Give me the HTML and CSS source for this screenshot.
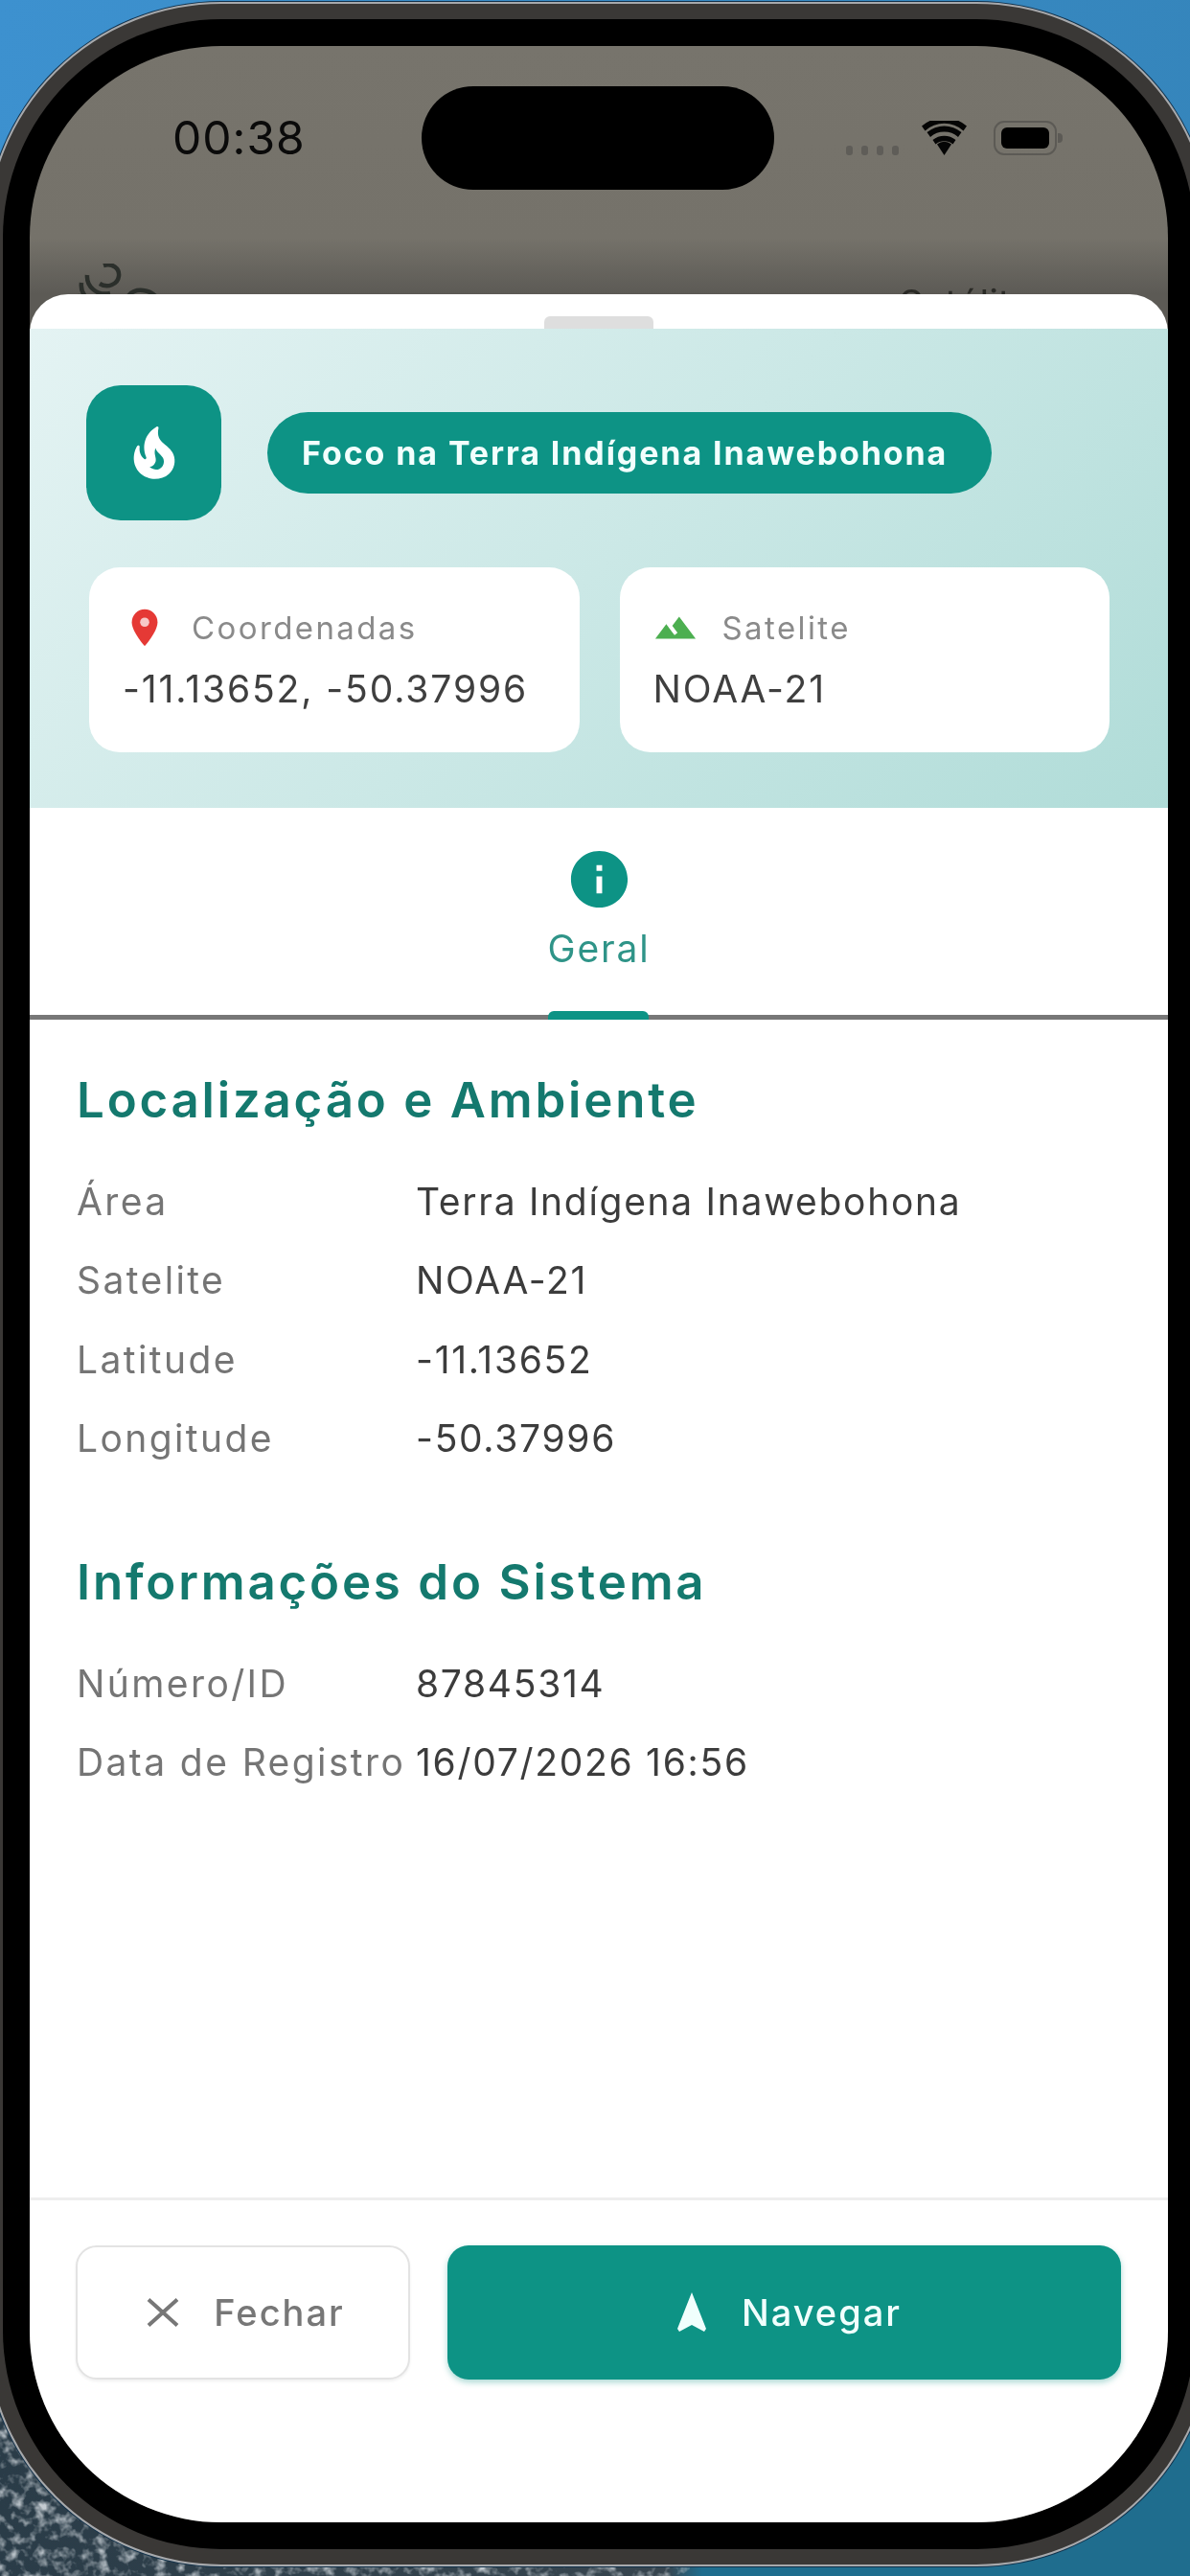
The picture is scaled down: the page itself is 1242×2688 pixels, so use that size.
FILE: index.html
```html
<!DOCTYPE html>
<html lang="pt-BR">
<head>
<meta charset="utf-8">
<title>Foco na Terra Indígena Inawebohona</title>
<link rel="stylesheet" href="styles.css">
</head>
<body>
<div class="stage">
  <svg class="noise" viewBox="0 0 720 240" aria-hidden="true">
    <filter id="speckle" x="0" y="0" width="100%" height="100%">
      <feTurbulence type="fractalNoise" baseFrequency="0.08" numOctaves="3" seed="7"/>
      <feColorMatrix values="0 0 0 0 0.55  0 0 0 0 0.6  0 0 0 0 0.64  2.6 0 0 0 -1.2"/>
    </filter>
    <rect width="720" height="240" filter="url(#speckle)"/>
  </svg>
  <div class="device">
    <div class="bezel">
      <div class="screen">
        <div class="behind">
          <div class="status">
            <div class="time">00:38</div>
            <div class="island"></div>
            <div class="sys">
              <div class="dots"><i></i><i></i><i></i><i></i></div>
              <svg class="wifi" viewBox="0 0 47 36"><path d="M23.5 36 16 24.5a12 12 0 0 1 15 0z"/><path d="M11.5 20a19 19 0 0 1 24 0l-3 4.5a14 14 0 0 0-18 0z"/><path d="M5.500 12a28 28 0 0 1 36 0l-3.500 5a22 22 0 0 0-29 0z"/><path d="M0 5.500a36 36 0 0 1 47 0l-3.500 5a30 30 0 0 0-40 0z"/></svg>
              <div class="battery"><div class="cell"></div></div>
            </div>
          </div>
          <div class="ghost">
            <svg class="ghost-logo" viewBox="0 0 90 70"><g fill="none" stroke="#2b2f2b" stroke-width="4.500"><path d="M28 2c9-3 17 3 16 11-1 9-12 13-20 8"/><path d="M11 12c-1 12 10 22 24 19"/><path d="M5 20C3 34 18 46 34 41"/><path d="M1 32c1 12 14 22 30 20"/><path d="M54 34c4-9 26-9 32 6"/><path d="M60 42c5-5 14-5 18 2"/></g></svg>
            <div class="ghost-text">Satélites</div>
          </div>
        </div>
        <div class="sheet">
          <div class="grab"><div class="handle"></div></div>
          <header class="hero">
            <div class="hero-top">
              <div class="hero-icon">
                <svg viewBox="0 0 24 24"><path fill-rule="evenodd" d="M19.48 12.35c-1.57-4.08-7.16-4.3-5.81-10.23.1-.44-.37-.78-.75-.55C9.29 3.71 6.68 8 8.87 13.62c.18.46-.36.89-.75.59-1.81-1.37-2-3.34-1.84-4.75.06-.52-.62-.77-.91-.34C4.69 10.16 4 11.84 4 14.37c.38 5.6 5.11 7.32 6.81 7.54 2.43.31 5.06-.14 6.95-1.87 2.08-1.93 2.84-5.01 1.72-7.69zM10.200 17.380c1.440-.35 2.180-1.390 2.380-2.310.33-1.430-.96-2.830-.09-5.090.33 1.870 3.270 3.040 3.270 5.080.08 2.530-2.660 4.700-5.560 2.320z"/></svg>
              </div>
              <div class="pill">Foco na Terra Indígena Inawebohona</div>
            </div>
            <div class="cards">
              <div class="card">
                <div class="card-label">
                  <svg class="pin" viewBox="0 0 24 24"><path d="M12 2C8.130 2 5 5.130 5 9c0 5.250 7 13 7 13s7-7.750 7-13c0-3.870-3.130-7-7-7z"/><circle class="pin-dot" cx="12" cy="9" r="2.500"/></svg>
                  <span>Coordenadas</span>
                </div>
                <div class="card-value">-11.13652, -50.37996</div>
              </div>
              <div class="card">
                <div class="card-label">
                  <svg class="mount" viewBox="0 0 24 24"><path d="M14 6l-3.750 5 2.850 3.800-1.600 1.200C9.810 13.750 7 10 7 10l-6 8h22L14 6z"/></svg>
                  <span>Satelite</span>
                </div>
                <div class="card-value">NOAA-21</div>
              </div>
            </div>
          </header>
          <nav class="tabs">
            <div class="tab">
              <svg class="tab-icon" viewBox="0 0 24 24"><path d="M12 2C6.480 2 2 6.480 2 12s4.480 10 10 10 10-4.480 10-10S17.520 2 12 2zm1 15h-2v-6h2v6zm0-8h-2V7h2v2z"/></svg>
              <span>Geral</span>
            </div>
            <div class="tab-indicator"></div>
          </nav>
          <main class="content">
            <section class="section">
              <h2>Localização e Ambiente</h2>
              <dl class="rows">
                <dt>Área</dt><dd>Terra Indígena Inawebohona</dd>
                <dt>Satelite</dt><dd>NOAA-21</dd>
                <dt>Latitude</dt><dd>-11.13652</dd>
                <dt>Longitude</dt><dd>-50.37996</dd>
              </dl>
            </section>
            <section class="section">
              <h2>Informações do Sistema</h2>
              <dl class="rows">
                <dt>Número/ID</dt><dd>87845314</dd>
                <dt>Data de Registro</dt><dd>16/07/2026 16:56</dd>
              </dl>
            </section>
          </main>
          <footer class="actions">
            <button class="btn btn-close">
              <svg class="x-icon" viewBox="0 0 34 30"><path d="M2 1.500 32 28.500M32 1.500 2 28.500"/></svg>
              <span>Fechar</span>
            </button>
            <button class="btn btn-go">
              <svg class="nav-icon" viewBox="0 0 36 42"><path d="M18 0 33 38l-2 3-13-7-13 7-2-3z"/></svg>
              <span>Navegar</span>
            </button>
          </footer>
        </div>
      </div>
    </div>
  </div>
</div>
</body>
</html>
```

FILE: styles.css
```css
* { box-sizing: border-box; }
html, body { margin: 0; padding: 0; }
body { font-family: Inter, "Liberation Sans", sans-serif; background: #000; }

.stage {
  position: relative;
  width: 1242px;
  height: 2688px;
  overflow: hidden;
  padding-top: 2px;
  filter: blur(0.6px);
  background:
    linear-gradient(100deg, #3d91cf 0%, #3585bb 100%) top / 100% 400px no-repeat,
    linear-gradient(90deg, #2a3c48 0%, #37454f 56%, #1f6d8e 59%, #1f6d8e 100%);
}
.noise {
  position: absolute;
  left: 0;
  bottom: 0;
  width: 720px;
  height: 240px;
}

.device {
  position: relative;
  width: 1280px;
  height: 2676px;
  margin-left: -15px;
  padding: 16px;
  border: 2px solid #a7a9ac;
  border-radius: 246px;
  background: #3a3836;
  box-shadow: 0 0 0 1px #12314a;
}
.bezel {
  height: 100%;
  padding: 28px;
  border-radius: 228px;
  background: #000;
}
.screen {
  height: 100%;
  display: flex;
  flex-direction: column;
  overflow: hidden;
  border-radius: 200px;
  background: linear-gradient(180deg, #77746c 0, #75726a 200px, #5c5a55 259px);
}

.behind { height: 259px; flex: none; overflow: hidden; }
.status {
  display: grid;
  grid-template-columns: 409px 368px 1fr;
  align-items: center;
  height: 108px;
  margin-top: 42px;
}
.time {
  padding-left: 149px;
  font-size: 48px;
  font-weight: 400;
  letter-spacing: 1px;
  line-height: 50px;
  color: #0a0a0a;
}
.island { height: 108px; border-radius: 54px; background: #000; }
.sys { display: flex; align-items: flex-end; padding-left: 75px; height: 36px; }
.dots { display: flex; gap: 9px; margin-right: 24px; height: 10px; }
.dots i { width: 7px; height: 10px; border-radius: 3px; background: #5f5d58; }
.wifi { width: 47px; height: 36px; fill: #050505; margin-right: 28px; }
.battery {
  position: relative;
  width: 66px;
  height: 36px;
  padding: 5px 6px;
  border: 2px solid #5c5a55;
  border-radius: 11px;
}
.cell { height: 100%; border-radius: 6px; background: #000; }
.battery::after {
  content: "";
  position: absolute;
  right: -8px;
  top: 11px;
  width: 5px;
  height: 10px;
  border-radius: 0 4px 4px 0;
  background: #5c5a55;
}

.ghost { display: flex; justify-content: space-between; margin-top: 77px; padding: 0 120px 0 49px; }
.ghost-logo { width: 90px; height: 70px; flex: none; }
.ghost-text { font-size: 40px; line-height: 60px; margin-top: 12px; color: #2a2a26; }

.sheet {
  position: relative;
  flex: 1;
  display: flex;
  flex-direction: column;
  min-height: 0;
  border-radius: 40px 40px 0 0;
  background: #fff;
}
.grab { height: 36px; flex: none; padding-top: 23px; display: flex; justify-content: center; }
.handle { width: 114px; height: 14px; border-radius: 6px 6px 0 0; background: #dedede; }

.hero {
  flex: none;
  height: 500px;
  padding: 59px 61px 0 59px;
  background: linear-gradient(135deg, #e4f3f3 0%, #cbe8e6 50%, #b0dcd8 100%);
}
.hero-top { display: flex; align-items: center; gap: 48px; height: 141px; }
.hero-icon {
  width: 141px;
  height: 141px;
  flex: none;
  display: flex;
  align-items: center;
  justify-content: center;
  border-radius: 36px;
  background: #0d9385;
}
.hero-icon svg { width: 64px; height: 64px; fill: #fff; }
.pill {
  height: 85px;
  padding: 0 46px 0 36px;
  display: flex;
  align-items: center;
  border-radius: 43px;
  background: #0d9385;
  color: #f2fffd;
  font-size: 34px;
  font-weight: 700;
  letter-spacing: 1.900px;
  white-space: nowrap;
}

.cards { display: flex; gap: 42px; margin-top: 49px; padding-left: 3px; }
.card {
  flex: 1;
  height: 193px;
  padding: 40px 20px 0 35px;
  border-radius: 32px;
  background: #fff;
}
.card-label {
  display: flex;
  align-items: center;
  gap: 26px;
  height: 46px;
  font-size: 33px;
  letter-spacing: 2.400px;
  color: #8a8a8a;
}
.pin { width: 46px; height: 46px; flex: none; fill: #e53935; }
.pin-dot { fill: #f7c9c7; }
.mount { width: 46px; height: 46px; flex: none; fill: #4caf50; }
.card-value {
  margin-top: 18px;
  height: 46px;
  line-height: 46px;
  font-size: 39px;
  letter-spacing: 1.900px;
  color: #3f3f3f;
  white-space: nowrap;
}

.tabs {
  position: relative;
  flex: none;
  height: 221px;
  padding-top: 39px;
  border-bottom: 5px solid #777;
  display: flex;
  justify-content: center;
}
.tab {
  display: flex;
  flex-direction: column;
  align-items: center;
  gap: 14px;
  font-size: 39px;
  letter-spacing: 1.800px;
  line-height: 46px;
  color: #2f9488;
}
.tab-icon { width: 71px; height: 71px; fill: #0d9385; }
.tab-indicator {
  position: absolute;
  left: 541px;
  bottom: -5px;
  width: 105px;
  height: 9px;
  border-radius: 6px 6px 0 0;
  background: #0d9385;
}

.content { flex: 1; min-height: 0; padding: 59px 0 0 49px; }
.section + .section { margin-top: 84px; }
h2 {
  margin: 0 0 39px;
  font-size: 51px;
  line-height: 50px;
  font-weight: 600;
  letter-spacing: 2.800px;
  color: #14796e;
}
.rows {
  display: grid;
  grid-template-columns: 354px 1fr;
  grid-auto-rows: 82.500px;
  align-items: center;
  margin: 0;
  font-size: 39px;
}
dt { color: #757575; white-space: nowrap; letter-spacing: 2.400px; }
dd { margin: 0; color: #3c3c3c; white-space: nowrap; letter-spacing: 1.700px; }

.actions {
  flex: none;
  height: 339px;
  padding: 47px 49px 0 48px;
  border-top: 3px solid #eeeeee;
  display: flex;
  align-items: flex-start;
  gap: 39px;
}
.btn {
  height: 140px;
  display: flex;
  align-items: center;
  justify-content: center;
  border-radius: 22px;
  font-family: inherit;
  font-size: 38px;
  letter-spacing: 2px;
  font-weight: 500;
}
.btn-close { width: 349px; flex: none; gap: 36px; padding-left: 12px; background: #fff; border: 2px solid #e3e3e3; color: #777; box-shadow: 0 2px 3px rgba(0,0,0,.06); }
.btn-go { flex: 1; gap: 34px; padding-left: 14px; border: 0; background: #0d9385; color: #f0fffd; box-shadow: 0 3px 6px rgba(13,147,133,.35); }
.x-icon { width: 34px; height: 30px; fill: none; stroke: #777; stroke-width: 4; }
.nav-icon { width: 36px; height: 42px; fill: #f0fffd; }
```
